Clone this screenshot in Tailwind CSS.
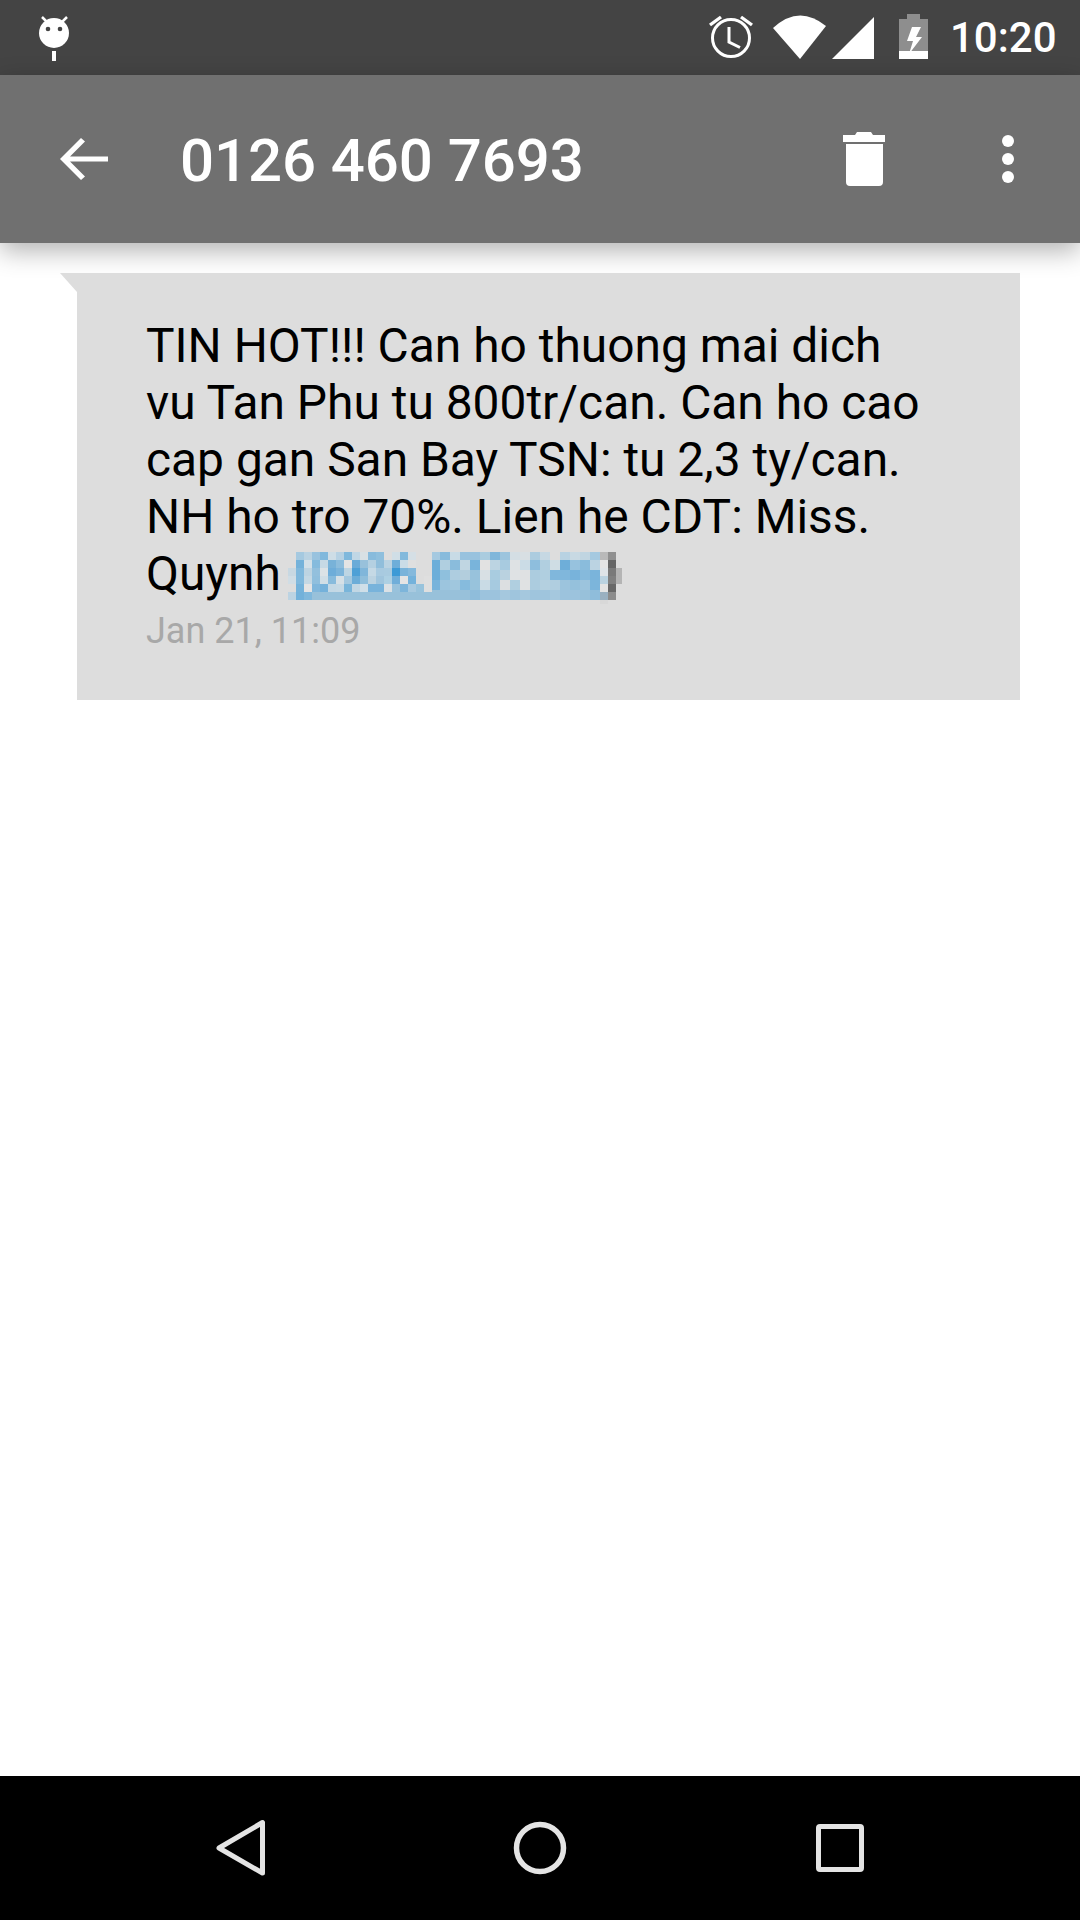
<!doctype html>
<html><head><meta charset="utf-8"><script src="https://cdn.jsdelivr.net/npm/@tailwindcss/browser@4"></script></head>
<body class="bg-white">
<div class="relative w-[1080px] h-[1920px] flex flex-col overflow-hidden bg-white font-['Roboto',sans-serif]">
  <div class="h-[75px] shrink-0 bg-[#444444] flex items-start pt-[14px] pl-[37px]">
    <svg width="34" height="48" viewBox="37 14 34 48"><circle cx="54" cy="33" r="15" fill="#fff"/><rect x="52" y="51" width="4" height="10" fill="#fff"/><path d="M42 17l5 5M67 17l-5 5" stroke="#fff" stroke-width="2.5"/><circle cx="48" cy="29" r="2.3" fill="#444"/><circle cx="60" cy="29" r="2.3" fill="#444"/></svg>
    <svg width="44" height="46" viewBox="709 14 44 46" class="ml-[638px]"><circle cx="731" cy="38" r="18.5" fill="none" stroke="#fff" stroke-width="3"/><path d="M729 27v15l11 5.5" fill="none" stroke="#fff" stroke-width="3"/><path d="M710 25l11-8M752 25l-11-8" stroke="#fff" stroke-width="3.4"/></svg>
    <svg width="53" height="46" viewBox="773 14 53 46" class="ml-[20px]"><path d="M773 28Q799 4 826 26L800 59Z" fill="#fff"/></svg>
    <svg width="42" height="46" viewBox="832 14 42 46" class="ml-[6px]"><path d="M874 17V59H832Z" fill="#fff"/></svg>
    <svg width="29" height="46" viewBox="899 14 29 46" class="ml-[25px]"><path d="M899 19h8v-5h13v5h8v32h-29Z" fill="#fff" opacity=".4"/><rect x="899" y="51" width="29" height="8" fill="#fff"/><path d="M917 27h-5l-5 14h6l-4 13 13-17h-6l5-10Z" fill="#fff"/></svg>
    <span class="ml-[22px] mt-[3px] text-white text-[42px] leading-[42px] font-medium">10:20</span>
  </div>
  <div class="relative z-10 h-[168px] shrink-0 bg-[#707070] flex items-center shadow-[0_8px_24px_rgba(0,0,0,0.3)]">
    <svg width="48" height="48" viewBox="0 0 48 48" class="ml-[60px]"><path d="M48 21.5H10L25 6.5 21 3 0 24l21 21 4-3.5-15-15h38Z" fill="#fff"/></svg>
    <span class="ml-[72px] mt-[3px] text-white text-[60px] leading-none font-medium tracking-[-0.1px]">0126 460 7693</span>
    <svg width="42" height="54" viewBox="843 132 42 54" class="ml-auto"><path d="M843 135h12l2-3h14l2 3h12v7h-42Z M846 144h37v38a4 4 0 0 1-4 4h-29a4 4 0 0 1-4-4Z" fill="#fff"/></svg>
    <div class="ml-[117px] mr-[66px] flex flex-col gap-[6px]">
      <span class="block w-[12px] h-[12px] rounded-full bg-white"></span><span class="block w-[12px] h-[12px] rounded-full bg-white"></span><span class="block w-[12px] h-[12px] rounded-full bg-white"></span>
    </div>
  </div>
  <div class="flex-1 relative">
    <div class="relative z-20 ml-[77px] mt-[30px] w-[943px] h-[427px] bg-[#dddddd] pl-[69px] pt-[45px]">
      <svg width="17" height="19" viewBox="0 0 17 19" class="absolute left-[-17px] top-0"><path d="M0 0H17V19Z" fill="#dddddd"/></svg>
      <p class="text-[47.9px] leading-[57px] text-black whitespace-nowrap">TIN HOT!!! Can ho thuong mai dich<br>vu Tan Phu tu 800tr/can. Can ho cao<br>cap gan San Bay TSN: tu 2,3 ty/can.<br>NH ho tro 70%. Lien he CDT: Miss.<br>Quynh</p>
      <p class="text-[36px] leading-[48px] text-[#a8a8a8] mt-[4px]">Jan 21, 11:09</p>
      <svg width="334" height="52" viewBox="0 0 334 52" shape-rendering="crispEdges" class="absolute left-[211px] top-[279px]">
        <path fill="#a5c9e0" d="M8 0h8v8h-8z"/><path fill="#b9d2e2" d="M16 0h8v8h-8z"/><path fill="#98c2de" d="M24 0h8v8h-8z"/><path fill="#80b8dc" d="M32 0h8v8h-8z"/><path fill="#cedde6" d="M40 0h8v8h-8z"/><path fill="#b6d1e3" d="M48 0h8v8h-8z"/><path fill="#7fb8dc" d="M56 0h8v8h-8z"/><path fill="#c0d7e5" d="M64 0h8v8h-8z"/><path fill="#d8e0e4" d="M72 0h8v8h-8z"/><path fill="#88bbdc" d="M80 0h8v8h-8z"/><path fill="#8fbfdd" d="M88 0h8v8h-8z"/><path fill="#d0dee6" d="M104 0h8v8h-8z"/><path fill="#82b9dc" d="M112 0h8v8h-8z"/><path fill="#d5dfe5" d="M120 0h8v8h-8z"/>
        <path fill="#74b2da" d="M8 8h8v8h-8z"/><path fill="#d2e0e8" d="M16 8h8v8h-8z"/><path fill="#85bbdd" d="M24 8h8v8h-8z"/><path fill="#c6d9e5" d="M32 8h8v8h-8z"/><path fill="#78b2d8" d="M40 8h8v8h-8z"/><path fill="#8dbddc" d="M48 8h8v8h-8z"/><path fill="#e4e4e4" d="M56 8h8v8h-8z"/><path fill="#6aabd8" d="M64 8h8v8h-8z"/><path fill="#98c1db" d="M72 8h8v8h-8z"/><path fill="#b4d0e1" d="M80 8h8v8h-8z"/><path fill="#90bedb" d="M88 8h8v8h-8z"/><path fill="#bad3e2" d="M96 8h8v8h-8z"/><path fill="#6eaed9" d="M104 8h8v8h-8z"/><path fill="#cadce7" d="M112 8h8v8h-8z"/><path fill="#dfdfdf" d="M120 8h8v8h-8z"/>
        <path fill="#c8d8e2" d="M0 16h8v8H0z"/><path fill="#80b8dc" d="M8 16h8v8h-8z"/><path fill="#bdd4e2" d="M16 16h8v8h-8z"/><path fill="#93c0dd" d="M24 16h8v8h-8z"/><path fill="#dbe2e6" d="M32 16h8v8h-8z"/><path fill="#6eadd9" d="M40 16h8v8h-8z"/><path fill="#7cb4da" d="M48 16h8v8h-8z"/><path fill="#bdd5e3" d="M56 16h8v8h-8z"/><path fill="#4ea0d6" d="M64 16h8v8h-8z"/><path fill="#80b6da" d="M72 16h8v8h-8z"/><path fill="#c5d9e5" d="M80 16h8v8h-8z"/><path fill="#a8cae0" d="M88 16h8v8h-8z"/><path fill="#a9cbe0" d="M96 16h8v8h-8z"/><path fill="#3d9ad6" d="M104 16h8v8h-8z"/><path fill="#79b3da" d="M112 16h8v8h-8z"/><path fill="#85b9dc" d="M120 16h8v8h-8z"/>
        <path fill="#d0dde5" d="M0 24h8v8H0z"/><path fill="#80b8dc" d="M8 24h8v8h-8z"/><path fill="#c4d8e4" d="M16 24h8v8h-8z"/><path fill="#90bfdd" d="M24 24h8v8h-8z"/><path fill="#d0dee6" d="M32 24h8v8h-8z"/><path fill="#88bbdc" d="M40 24h8v8h-8z"/><path fill="#d6e0e6" d="M48 24h8v8h-8z"/><path fill="#a4c8df" d="M56 24h8v8h-8z"/><path fill="#6cadd8" d="M64 24h8v8h-8z"/><path fill="#8fbedb" d="M72 24h8v8h-8z"/><path fill="#bcd3e1" d="M80 24h8v8h-8z"/><path fill="#a0c5dd" d="M88 24h8v8h-8z"/><path fill="#add0e3" d="M96 24h8v8h-8z"/><path fill="#70aed9" d="M104 24h8v8h-8z"/><path fill="#e4e4e4" d="M112 24h8v8h-8z"/><path fill="#74b2db" d="M120 24h8v8h-8z"/><path fill="#dfdfdf" d="M136 24h8v8h-8z"/>
        <path fill="#74b2da" d="M8 32h8v8h-8z"/><path fill="#e4e4e4" d="M16 32h8v8h-8z"/><path fill="#80b7dc" d="M24 32h8v8h-8z"/><path fill="#74b1da" d="M32 32h8v8h-8z"/><path fill="#c3d8e5" d="M40 32h8v8h-8z"/><path fill="#c5d9e5" d="M48 32h8v8h-8z"/><path fill="#79b5da" d="M56 32h8v8h-8z"/><path fill="#c2d7e4" d="M64 32h8v8h-8z"/><path fill="#d0dfe8" d="M72 32h8v8h-8z"/><path fill="#78b3db" d="M80 32h16v8h-16z"/><path fill="#dbe1e5" d="M96 32h8v8h-8z"/><path fill="#98c2dc" d="M104 32h8v8h-8z"/><path fill="#7db5da" d="M112 32h8v8h-8z"/><path fill="#a8cae0" d="M120 32h8v8h-8z"/><path fill="#98c3dc" d="M128 32h8v8h-8z"/><path fill="#dfdfdf" d="M136 32h8v8h-8z"/>
        <path fill="#bcd3e2" d="M0 40h8v8H0z"/><path fill="#72b1da" d="M8 40h8v8h-8z"/><path fill="#80b8dc" d="M16 40h8v8h-8z"/><path fill="#98c1da" d="M24 40h120v8H24z"/>
        <path fill="#a5c9e0" d="M144 0h8v8h-8z"/><path fill="#6caed9" d="M144 8h8v20h-8z"/><path fill="#78b3db" d="M144 28h8v10h-8z"/><path fill="#98c1da" d="M144 38h8v10h-8z"/>
        <path fill="#88bbdc" d="M152 0h10v8h-10z"/><path fill="#b0cfe0" d="M152 8h10v10h-10z"/><path fill="#8fc0dd" d="M152 18h10v10h-10z"/><path fill="#9cc5de" d="M152 28h10v10h-10z"/><path fill="#98c1da" d="M152 38h10v10h-10z"/>
        <path fill="#c8dbe6" d="M162 0h10v8h-10z"/><path fill="#8abcdc" d="M162 8h10v10h-10z"/><path fill="#aecde0" d="M162 18h10v10h-10z"/><path fill="#a0c7de" d="M162 28h10v10h-10z"/><path fill="#98c1da" d="M162 38h10v10h-10z"/>
        <path fill="#98c2de" d="M172 0h10v8h-10z"/><path fill="#c0d6e2" d="M172 8h10v10h-10z"/><path fill="#b3cedd" d="M172 18h10v10h-10z"/><path fill="#86bbdd" d="M172 28h10v10h-10z"/><path fill="#98c1da" d="M172 38h10v10h-10z"/>
        <path fill="#98c2de" d="M182 0h10v8h-10z"/><path fill="#79b4db" d="M182 8h10v10h-10z"/><path fill="#98c2dc" d="M182 18h10v10h-10z"/><path fill="#98c3dc" d="M182 28h10v10h-10z"/><path fill="#8fbddb" d="M182 38h10v10h-10z"/>
        <path fill="#aaccdf" d="M192 0h10v8h-10z"/><path fill="#e2e2e2" d="M192 8h10v10h-10z"/><path fill="#d8e0e4" d="M192 18h10v10h-10z"/><path fill="#c9dbe5" d="M192 28h10v10h-10z"/><path fill="#9cc3dd" d="M192 38h10v10h-10z"/>
        <path fill="#7fb6da" d="M202 0h10v8h-10z"/><path fill="#bcd4e2" d="M202 8h10v10h-10z"/><path fill="#a9cce0" d="M202 18h10v10h-10z"/><path fill="#a6cae0" d="M202 28h10v10h-10z"/><path fill="#9cc3dd" d="M202 38h10v10h-10z"/>
        <path fill="#9cc4dd" d="M212 0h10v8h-10z"/><path fill="#a8cbe0" d="M212 8h10v10h-10z"/><path fill="#bad2e0" d="M212 18h10v10h-10z"/><path fill="#dcdfe1" d="M212 28h10v10h-10z"/><path fill="#a5c8de" d="M212 38h10v10h-10z"/>
        <path fill="#d4dee4" d="M222 0h10v8h-10z"/><path fill="#dee2e4" d="M222 8h10v10h-10z"/><path fill="#dfe2e4" d="M222 18h10v10h-10z"/><path fill="#b0cfe0" d="M222 28h10v10h-10z"/><path fill="#9fc5dd" d="M222 38h10v10h-10z"/>
        <path fill="#d8dfe3" d="M232 0h10v8h-10z"/><path fill="#cbdce6" d="M232 8h10v10h-10z"/><path fill="#dfe1e3" d="M232 18h10v10h-10z"/><path fill="#e0e2e3" d="M232 28h10v10h-10z"/><path fill="#a5c8de" d="M232 38h10v10h-10z"/>
        <path fill="#acccdf" d="M242 0h10v8h-10z"/><path fill="#8ebedd" d="M242 8h10v10h-10z"/><path fill="#acccdf" d="M242 18h10v20h-10z"/><path fill="#9fc5dd" d="M242 38h10v10h-10z"/>
        <path fill="#c6d8e3" d="M252 0h10v8h-10z"/><path fill="#b1cfe0" d="M252 8h10v10h-10z"/><path fill="#b0cfe0" d="M252 18h10v10h-10z"/><path fill="#b4d0e0" d="M252 28h10v10h-10z"/><path fill="#9fc5dd" d="M252 38h10v10h-10z"/>
        <path fill="#cfdde4" d="M262 8h10v10h-10z"/><path fill="#80b7dc" d="M262 18h10v10h-10z"/><path fill="#b0cee0" d="M262 28h10v10h-10z"/><path fill="#a5c8de" d="M262 38h10v10h-10z"/>
        <path fill="#b8d2e2" d="M272 0h10v8h-10z"/><path fill="#6eaed9" d="M272 8h10v10h-10z"/><path fill="#80b7dc" d="M272 18h10v10h-10z"/><path fill="#9cc4dd" d="M272 28h10v10h-10z"/><path fill="#9cc3dd" d="M272 38h10v10h-10z"/>
        <path fill="#c8d9e3" d="M282 0h10v8h-10z"/><path fill="#97c2de" d="M282 8h10v10h-10z"/><path fill="#78b3db" d="M282 18h10v10h-10z"/><path fill="#95c1dc" d="M282 28h10v10h-10z"/><path fill="#9cc3dd" d="M282 38h10v10h-10z"/>
        <path fill="#c0d5e1" d="M292 0h10v8h-10z"/><path fill="#8abcdc" d="M292 8h10v10h-10z"/><path fill="#86badc" d="M292 18h10v10h-10z"/><path fill="#9cc4dd" d="M292 28h10v10h-10z"/><path fill="#98c1da" d="M292 38h10v10h-10z"/>
        <path fill="#a5c9e0" d="M302 0h10v8h-10z"/><path fill="#bbd3e2" d="M302 8h10v10h-10z"/><path fill="#7ab4db" d="M302 18h10v10h-10z"/><path fill="#7cb5db" d="M302 28h10v10h-10z"/><path fill="#8fbddb" d="M302 38h10v10h-10z"/>
        <path fill="#b9b9b9" d="M312 0h8v8h-8z"/><path fill="#e4e4e4" d="M312 8h8v8h-8z"/><path fill="#dfe4e8" d="M312 16h8v8h-8z"/><path fill="#bbd3e1" d="M312 24h8v8h-8z"/><path fill="#e4e4e4" d="M312 32h8v8h-8z"/><path fill="#9ab0c0" d="M312 40h8v8h-8z"/><path fill="#d8d8d8" d="M312 48h8v4h-8z"/>
        <path fill="#909090" d="M320 0h8v8h-8z"/><path fill="#666666" d="M320 8h8v8h-8z"/><path fill="#7a7a7a" d="M320 16h8v8h-8z"/><path fill="#808080" d="M320 24h8v8h-8z"/><path fill="#686868" d="M320 32h8v8h-8z"/><path fill="#8c8c8c" d="M320 40h8v8h-8z"/>
        <path fill="#b4b4b4" d="M328 16h6v16h-6z"/>
      </svg>
    </div>
  </div>
  <div class="h-[144px] shrink-0 bg-black flex items-center">
    <svg width="54" height="60" viewBox="214 1818 54 60" class="ml-[214px]"><path d="M219 1848L262.5 1822.5V1873Z" fill="none" stroke="#e4e4e4" stroke-width="5" stroke-linejoin="round"/></svg>
    <svg width="56" height="56" viewBox="0 0 56 56" class="ml-[244px]"><circle cx="28" cy="28" r="23.5" fill="none" stroke="#e4e4e4" stroke-width="5.5"/></svg>
    <svg width="52" height="52" viewBox="0 0 52 52" class="ml-[246px]"><rect x="4.5" y="4.5" width="43" height="43" rx="1.5" fill="none" stroke="#e4e4e4" stroke-width="5"/></svg>
  </div>
</div>
</body></html>
